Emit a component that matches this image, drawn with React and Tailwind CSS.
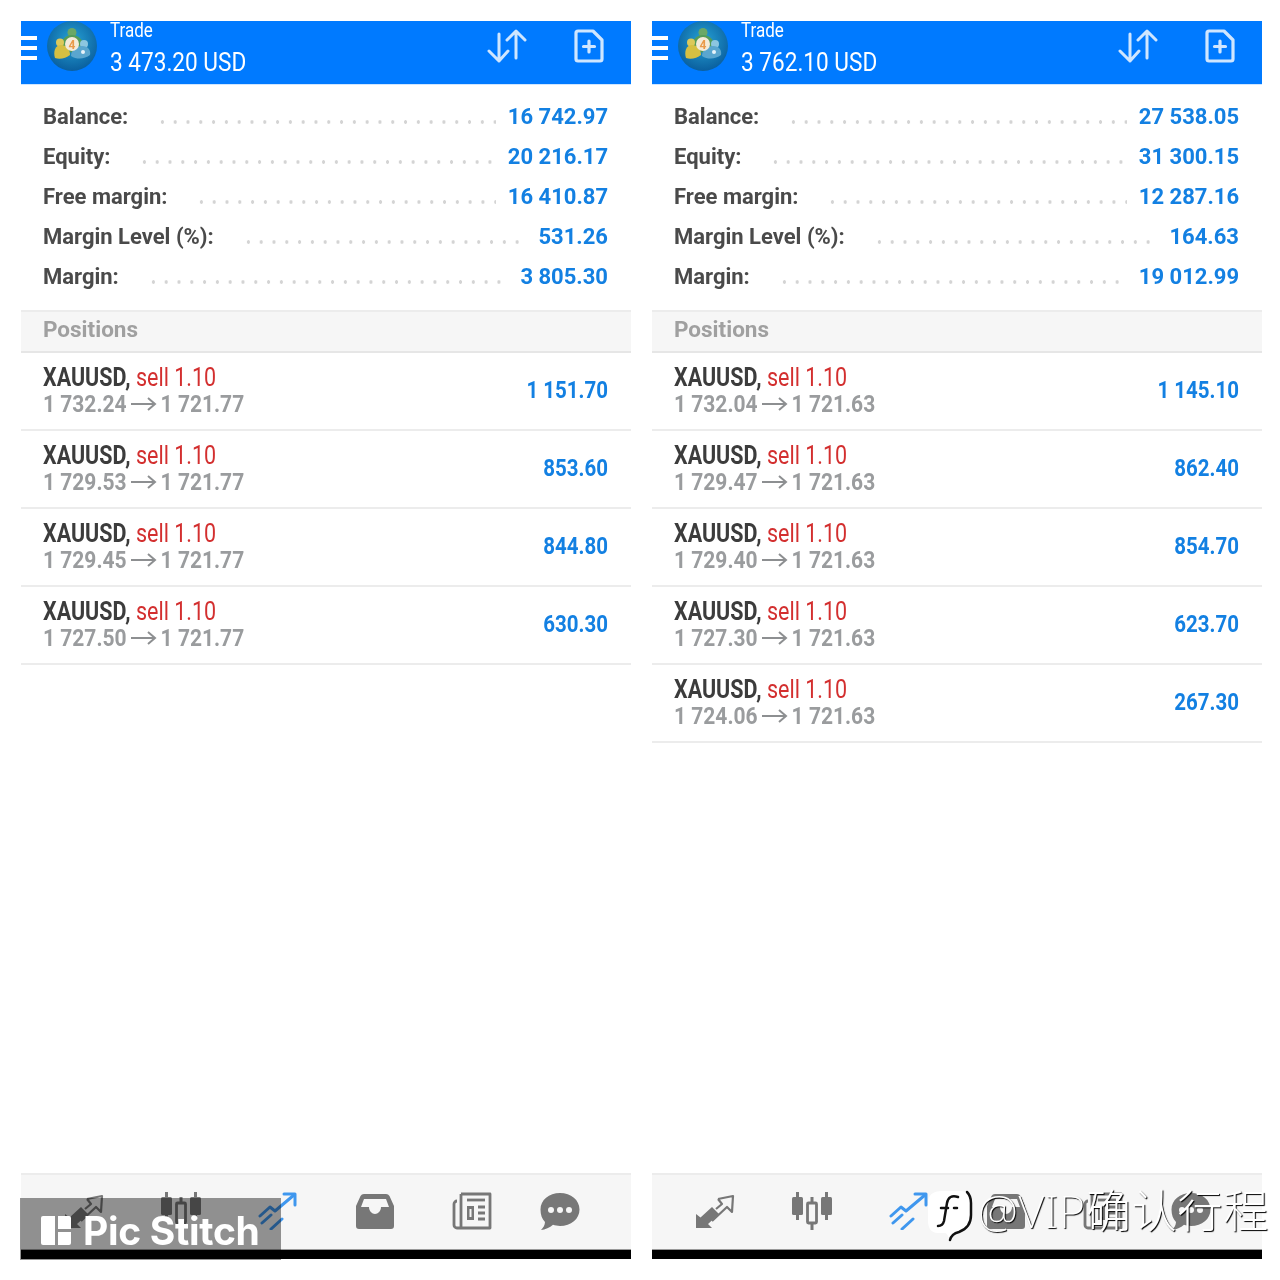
const panels = [
    {
        profit: '3 473.20 USD',
        stats: [
            ['Balance:', '16 742.97'],
            ['Equity:', '20 216.17'],
            ['Free margin:', '16 410.87'],
            ['Margin Level (%):', '531.26'],
            ['Margin:', '3 805.30'],
        ],
        now: '1 721.77',
        positions: [
            ['1 732.24', '1 151.70'],
            ['1 729.53', '853.60'],
            ['1 729.45', '844.80'],
            ['1 727.50', '630.30'],
        ],
    },
    {
        profit: '3 762.10 USD',
        stats: [
            ['Balance:', '27 538.05'],
            ['Equity:', '31 300.15'],
            ['Free margin:', '12 287.16'],
            ['Margin Level (%):', '164.63'],
            ['Margin:', '19 012.99'],
        ],
        now: '1 721.63',
        positions: [
            ['1 732.04', '1 145.10'],
            ['1 729.47', '862.40'],
            ['1 729.40', '854.70'],
            ['1 727.30', '623.70'],
            ['1 724.06', '267.30'],
        ],
    },
];

const Logo = () => (
    <svg viewBox="0 0 50 50" className="w-[50px] h-[50px]">
        <defs>
            <radialGradient id="mt" cx="50%" cy="40%" r="60%">
                <stop offset="0%" stopColor="#27a3d6" />
                <stop offset="100%" stopColor="#0a5f9e" />
            </radialGradient>
        </defs>
        <circle cx="25" cy="25" r="25" fill="url(#mt)" />
        <circle cx="25" cy="11.500" r="4.500" fill="#6aa866" />
        <path d="M14 26c0-8 5-12 11-12s11 4 11 11l-11 7z" fill="#559c58" />
        <circle cx="13" cy="21.500" r="4" fill="#dcc95a" />
        <path d="M8 37c-2-6 0-13 6-13 5 0 9 4 9 10-4 3-10 5-15 3z" fill="#d6bf42" />
        <circle cx="37" cy="23" r="4" fill="#8cc6e0" />
        <path d="M24 35c0-6 5-10 11-10 6 0 9 4 8 9-5 4-13 5-19 1z" fill="#5aa6cf" />
        <circle cx="36" cy="31" r="2" fill="#e8f4fa" />
        <circle cx="25" cy="23" r="7" fill="#f4ead8" />
        <text x="25" y="27.500" textAnchor="middle" fontSize="12" fontWeight="700" fill="#ea9a4a" fontFamily="Roboto, sans-serif">4</text>
    </svg>
);

const SortIcon = () => (
    <svg viewBox="0 0 40 34" className="w-10 h-[34px]" fill="none" stroke="#cfe6ff" strokeWidth="3" strokeLinecap="round" strokeLinejoin="round">
        <path d="M12 5v27M2 22l10 10 9-10" />
        <path d="M29 2v27M20 11l9-9 9 9" />
    </svg>
);

const NewOrderIcon = () => (
    <svg viewBox="0 0 30 34" className="w-[30px] h-[34px]" fill="none" stroke="#cfe6ff" strokeWidth="3.200" strokeLinejoin="round" strokeLinecap="round">
        <path d="M4 2h15l9 9v19a2 2 0 0 1-2 2H4a2 2 0 0 1-2-2V4a2 2 0 0 1 2-2z" />
        <path d="M15 12v11M9.500 17.500h11" />
    </svg>
);

const QuotesIcon = () => (
    <svg viewBox="0 0 40 36" className="w-10 h-9">
        <path d="M1 35V21l4.500 3.500L17 14l7 7-11 10 4 4z" fill="#777" />
        <path d="M23 6l15-3-1 16-5-5-15 14M23 6l4 5-6 5" fill="none" stroke="#777" strokeWidth="2.200" strokeLinejoin="round" />
    </svg>
);

const ChartIcon = () => (
    <svg viewBox="0 0 42 38" className="w-[42px] h-[38px]" fill="#777" stroke="#777">
        <path d="M6.500 0v28M35.500 0v28M21 5v33" strokeWidth="3" />
        <rect x="1" y="5" width="11" height="18" rx="1.500" stroke="none" />
        <rect x="30" y="5" width="11" height="18" rx="1.500" stroke="none" />
        <rect x="16.500" y="11" width="9" height="20" rx="1" fill="#f6f6f6" strokeWidth="2.800" />
    </svg>
);

const TradeIcon = () => (
    <svg viewBox="0 0 40 38" className="w-10 h-[38px]" fill="none" stroke="#3f97ee" strokeWidth="3" strokeLinecap="round" strokeLinejoin="round">
        <path d="M2 24l10-9 5 4L36 3" />
        <path d="M26 2h11v11" />
        <path d="M4 31l9-8M13 37l11-10" />
    </svg>
);

const InboxIcon = () => (
    <svg viewBox="0 0 40 36" className="w-10 h-9">
        <path
            fillRule="evenodd"
            fill="#777"
            d="M9 1h22a4 4 0 0 1 3.500 2L39 13v20a3 3 0 0 1-3 3H4a3 3 0 0 1-3-3V13L5.500 3A4 4 0 0 1 9 1zM9 6L6 14h8c0 4 3 7 6 7s6-3 6-7h8l-3-8z"
        />
    </svg>
);

const NewsIcon = () => (
    <svg viewBox="0 0 40 38" className="w-10 h-[38px]" fill="none" stroke="#777" strokeWidth="2.800">
        <path d="M9 2h29v34H5a3 3 0 0 1-3-3V12a3 3 0 0 1 3-3" strokeLinejoin="round" />
        <path d="M9 2v34" />
        <path d="M15 8h18" />
        <rect x="15" y="14" width="7" height="14" fill="#777" stroke="none" />
        <rect x="17.500" y="17" width="2" height="8" fill="#f6f6f6" stroke="none" />
        <path d="M26 15h7M26 21h7M26 27h7" strokeWidth="3" />
    </svg>
);

const ChatIcon = () => (
    <svg viewBox="0 0 40 38" className="w-10 h-[38px]">
        <path d="M20 1c11 0 19.500 7 19.500 16.500S31 34 20 34c-2.500 0-5-.5-7-1.200C10 36 5 37.500 1 38c2-2 4-5 4-8-3-3-4.500-7-4.500-12.500C.5 8 9 1 20 1z" fill="#777" />
        <circle cx="11" cy="18" r="3" fill="#f6f6f6" />
        <circle cx="20" cy="18" r="3" fill="#f6f6f6" />
        <circle cx="29" cy="18" r="3" fill="#f6f6f6" />
    </svg>
);

const Tall = ({ children, className = '' }) => (
    <span className={`inline-block scale-y-[1.18] ${className}`}>{children}</span>
);

const NavSlot = ({ children, className = '' }) => (
    <div className={`w-[97px] flex justify-center ${className}`}>{children}</div>
);

const Panel = ({ profit, stats, now, positions }) => (
    <div className="w-[610px] h-[1238px] flex flex-col bg-white">
        {/* Header */}
        <div className="h-[64px] shrink-0 bg-[#007aff] border-b border-[#cfe6ff] flex items-center overflow-hidden text-white">
            <div className="w-4 flex flex-col gap-[6px] -mt-[9px]">
                <div className="h-[4px] bg-white" />
                <div className="h-[4px] bg-white" />
                <div className="h-[4px] bg-white" />
            </div>
            <div className="ml-[10px] -mt-[14px]">
                <Logo />
            </div>
            <div className="ml-[13px] flex flex-col -mt-[8px]">
                <Tall className="text-[17px] leading-[22px] origin-left">Trade</Tall>
                <Tall className="text-[22.600px] leading-[32px] mt-[6px]">{profit}</Tall>
            </div>
            <div className="ml-auto mr-[27px] flex items-center gap-[47px] -mt-[14px]">
                <SortIcon />
                <NewOrderIcon />
            </div>
        </div>

        {/* Account */}
        <div className="pt-[11px] pb-[14px] pl-[22px] pr-[23px] border-b-2 border-[#ececec]">
            {stats.map(([label, value]) => (
                <div key={label} className="h-10 flex items-center text-[22px] font-bold">
                    <span className="text-[#4a4a4a]">{label}</span>
                    <div className="flex-1 h-1 mt-[12px] ml-[28px] mr-[12px] bg-[radial-gradient(circle,#d4d4d4_1.500px,transparent_2px)] bg-[length:12.800px_4px]" />
                    <span className="text-[#1380e2]">{value}</span>
                </div>
            ))}
        </div>

        <div className="h-[41px] px-[22px] pb-[3px] flex items-center bg-[#f6f6f6] border-b-2 border-[#e6e6e6] text-[22.500px] font-bold text-[#a0a0a0]">
            Positions
        </div>

        {/* Positions */}
        {positions.map(([open, pl]) => (
            <div key={open} className="h-[78px] shrink-0 pl-[22px] pr-[23px] pb-[1px] border-b-2 border-[#ececec] flex items-center justify-between">
                <div className="flex flex-col text-[21.500px] leading-[27px]">
                    <div>
                        <Tall className="origin-left font-bold text-[#3c3c3c]">XAUUSD,</Tall>{' '}
                        <Tall className="origin-left text-[#d32f2f]">sell 1.10</Tall>
                    </div>
                    <div className="text-[21px] font-bold text-[#9a9c9e] flex items-center">
                        <Tall>{open}</Tall>
                        <svg viewBox="0 0 26 14" className="w-[26px] h-[14px] mx-[4px]" fill="none" stroke="#8d8f91" strokeWidth="2">
                            <path d="M0 7h24M17 1l7 6-7 6" />
                        </svg>
                        <Tall>{now}</Tall>
                    </div>
                </div>
                <Tall className="text-[20.500px] font-bold text-[#1380e2]">{pl}</Tall>
            </div>
        ))}

        {/* Bottom nav */}
        <div className="mt-auto h-[86px] shrink-0 flex flex-col">
            <div className="h-[77px] bg-[#f6f6f6] border-t-2 border-b border-t-[#ececec] border-b-[#999] pl-[14px] flex items-center pb-[2px]">
                <NavSlot><QuotesIcon /></NavSlot>
                <NavSlot><ChartIcon /></NavSlot>
                <NavSlot><TradeIcon /></NavSlot>
                <NavSlot><InboxIcon /></NavSlot>
                <NavSlot><NewsIcon /></NavSlot>
                <NavSlot className="-ml-[9px]"><ChatIcon /></NavSlot>
            </div>
            <div className="h-[9px] bg-black" />
        </div>
    </div>
);

export default function App() {
    return (
        <div className="relative w-[1280px] h-[1280px] bg-white overflow-hidden font-['Roboto',sans-serif]">
            <div className="flex gap-[21px] pt-[21px] pl-[21px]">
                {panels.map((p) => (
                    <Panel key={p.profit} {...p} />
                ))}
            </div>

            {/* Pic Stitch badge */}
            <div className="absolute left-5 top-[1198px] w-[261px] h-[62px] bg-[#959595] mix-blend-multiply" />
            <div className="absolute left-5 top-[1198px] w-[261px] h-[62px] flex items-center pl-[21px] gap-[12px] text-white">
                <div className="grid grid-cols-2 gap-[3px] w-[30px] h-[29px] mt-[2px]">
                    <div className="row-span-2 bg-white rounded-l-[2px]" />
                    <div className="bg-white rounded-tr-[2px]" />
                    <div className="bg-white rounded-br-[2px]" />
                </div>
                <span className="font-['Inter',sans-serif] font-bold text-[39px] tracking-[-0.300px] leading-none mt-[2px]">Pic Stitch</span>
            </div>

            {/* Watermark */}
            <div className="absolute left-[926px] top-[1186px] flex items-center gap-[4px] text-white [text-shadow:1px_1px_1px_#000]">
                <svg viewBox="0 0 48 58" className="w-12 h-[58px]" fill="none" strokeLinecap="round">
                    <path d="M16 5h18c8 0 11 5 11 12v12c0 8-4 14-12 17-4 1-8 4-9 8-2-4-3-7-5-7H12C5 47 2 42 2 35V17C2 9 7 5 16 5z" fill="#fff" />
                    <path d="M41 6c3 3 4 7 4 11v12c0 8-4 14-12 17-4 1-8 4-9 8" stroke="#111" strokeWidth="2.500" />
                    <path d="M32 11c-6-2-10 0-11 6l-3 18c-1 4-3 5-6 5M15 22h7M28 22h3" stroke="#111" strokeWidth="2.500" />
                </svg>
                <span className="font-['Noto_Sans','Noto_Sans_CJK_SC',sans-serif] font-extralight text-[45px] leading-none tracking-[0.800px] -mt-[10px]">@VIP确认行程</span>
            </div>
        </div>
    );
}
